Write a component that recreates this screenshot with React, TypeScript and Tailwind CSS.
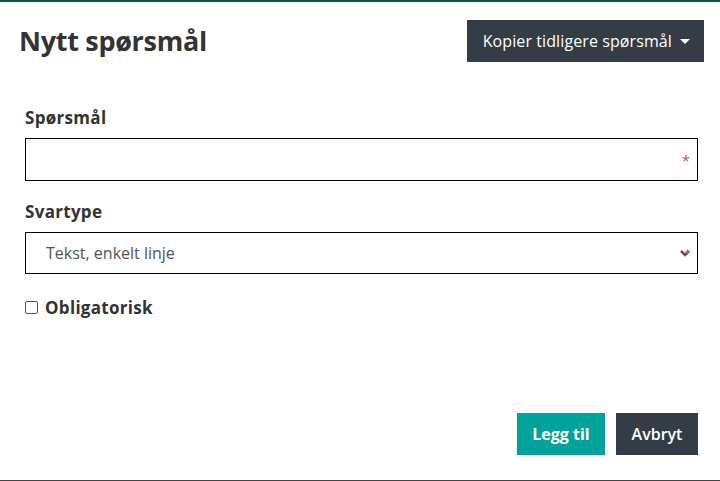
import React from "react";

export default function App() {
  return (
    <div className="w-[720px] h-[481px] bg-white flex flex-col overflow-hidden" style={{ fontFamily: "'Open Sans', Lato, sans-serif" }}>
      <div className="h-[2px] bg-[#12504a]" />
      <div className="flex-1 flex flex-col">
        <div className="flex items-start justify-between pl-[19px] pr-[16px] pt-[18px]">
          <h1 className="text-[27px] font-bold text-[#333] leading-[40px] mt-[1px] tracking-[-0.3px]">Nytt spørsmål</h1>
          <button className="h-[42px] pl-[16px] pr-[14px] bg-[#343c45] text-white text-[16px] flex items-center gap-[8px] tracking-[0.1px]">
            Kopier tidligere spørsmål
            <span className="w-0 h-0 border-l-[5px] border-r-[5px] border-t-[5px] border-l-transparent border-r-transparent border-t-white" />
          </button>
        </div>
        <div className="px-[25px] pr-[22px] mt-[45px] flex flex-col">
          <label className="text-[17px] font-bold text-[#333] leading-[22px] tracking-[0.3px]">Spørsmål</label>
          <div className="relative mt-[9px] h-[43px] border border-black">
            <span className="absolute right-[7px] top-[14px] text-[#e5484d] text-[15px] leading-none">*</span>
          </div>
          <label className="mt-[20px] text-[17px] font-bold text-[#333] leading-[22px] tracking-[0.3px]">Svartype</label>
          <div className="relative mt-[9px] h-[42px] border border-black flex items-center pl-[20px]">
            <span className="text-[16px] text-[#555]">Tekst, enkelt linje</span>
            <svg className="absolute right-[6px] top-[15px]" width="12" height="10" viewBox="0 0 12 10">
              <path d="M2 3 L6 7 L10 3" stroke="#555" strokeWidth="2.5" fill="none" />
              <path d="M8.5 1.5 V6.5 M6.5 3 L10.5 5 M6.5 5 L10.5 3" stroke="#e5484d" strokeWidth="1" fill="none" />
            </svg>
          </div>
          <label className="mt-[21px] flex items-center gap-[7px] text-[17px] font-bold text-[#333] tracking-[0.3px]">
            <span className="w-[13px] h-[13px] border border-[#555] rounded-[2px] bg-white" />
            Obligatorisk
          </label>
        </div>
        <div className="flex-1" />
        <div className="flex justify-end gap-[11px] pr-[22px] pb-[25px]">
          <button className="h-[42px] w-[88px] bg-[#00a399] text-white text-[16px] font-bold">Legg til</button>
          <button className="h-[42px] w-[82px] bg-[#343c45] text-white text-[16px] font-semibold">Avbryt</button>
        </div>
      </div>
      <div className="h-[1px] bg-[#444]" />
    </div>
  );
}
